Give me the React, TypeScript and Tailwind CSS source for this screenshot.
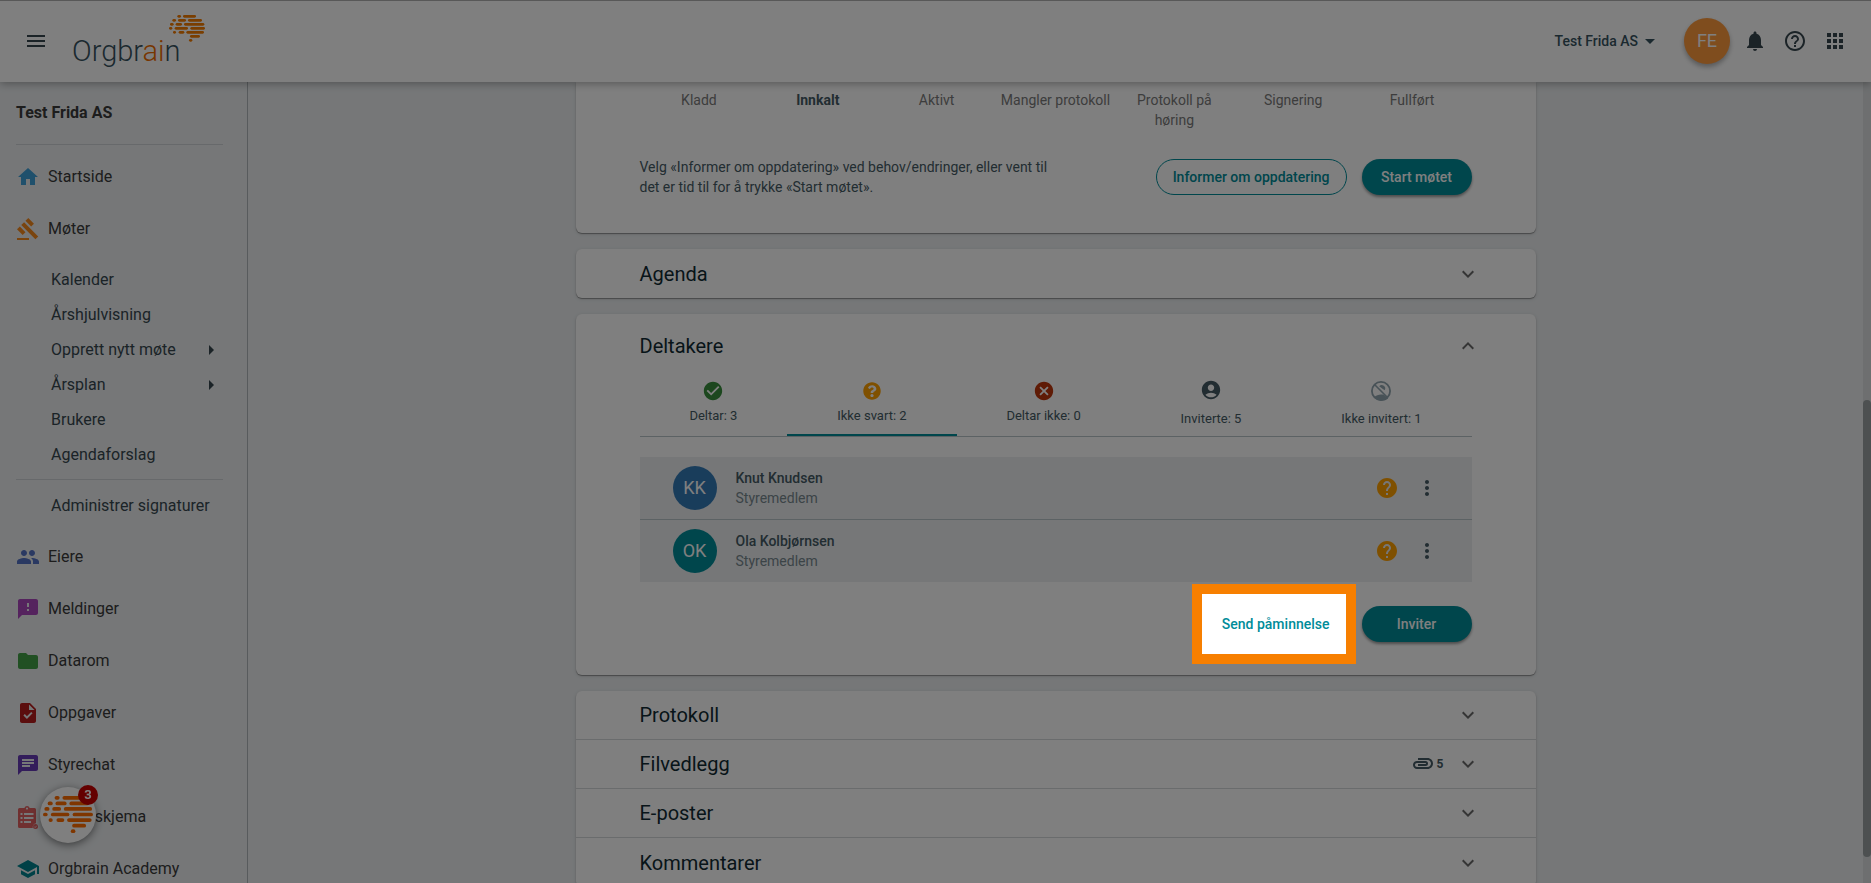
import { useState } from 'react';
import type { ReactNode } from 'react';
import type { IconType } from 'react-icons';
import { FaQuestionCircle } from 'react-icons/fa';
import {
    MdAccountCircle,
    MdApps,
    MdArrowDropDown,
    MdArrowRight,
    MdAttachment,
    MdCancel,
    MdChat,
    MdCheckCircle,
    MdExpandLess,
    MdExpandMore,
    MdFeedback,
    MdFolder,
    MdGavel,
    MdHelp,
    MdHelpOutline,
    MdHome,
    MdMenu,
    MdMoreVert,
    MdNotifications,
    MdPeople,
    MdSchool,
    MdTask,
} from 'react-icons/md';

type SubLink = { label: string; nested?: boolean };

const meetingLinks: SubLink[] = [
    { label: 'Kalender' },
    { label: 'Årshjulvisning' },
    { label: 'Opprett nytt møte', nested: true },
    { label: 'Årsplan', nested: true },
    { label: 'Brukere' },
    { label: 'Agendaforslag' },
];

const steps = ['Kladd', 'Innkalt', 'Aktivt', 'Mangler protokoll', 'Protokoll på høring', 'Signering', 'Fullført'];

const participants = [
    { name: 'Knut Knudsen', initials: 'KK', role: 'Styremedlem', color: 'bg-[#337ab7]' },
    { name: 'Ola Kolbjørnsen', initials: 'OK', role: 'Styremedlem', color: 'bg-[#008c99]' },
];

type Tab = { id: string; label: string; icon: ReactNode };

const tabs: Tab[] = [
    { id: 'yes', label: 'Deltar: 3', icon: <MdCheckCircle size={22} className="-m-0.5 text-[#388e3c]" /> },
    { id: 'pending', label: 'Ikke svart: 2', icon: <FaQuestionCircle size={18} className="text-[#ffa000]" /> },
    { id: 'no', label: 'Deltar ikke: 0', icon: <MdCancel size={22} className="-m-0.5 text-[#bf360c]" /> },
    {
        id: 'invited',
        label: 'Inviterte: 5',
        icon: (
            <span className="flex h-6 items-start">
                <MdAccountCircle size={22} className="text-[#455a64]" />
            </span>
        ),
    },
    { id: 'uninvited', label: 'Ikke invitert: 1', icon: <NotInvitedIcon /> },
];

// x, y and width of every dash in the brain mark
const brainDashes = [
    [25, 0, 11], [42, 0, 39],
    [10, 12, 11], [27, 12, 24], [57, 12, 42],
    [3, 24, 11], [20, 24, 19], [45, 24, 61],
    [0, 36, 10], [17, 36, 40], [64, 36, 44],
    [12, 48, 9], [29, 48, 17], [52, 48, 53],
    [63, 60, 30],
    [60, 72, 10],
];

function BrainMark({ className }: { className: string }) {
    return (
        <svg viewBox="0 0 108 80" className={className} fill="currentColor" aria-hidden="true">
            {brainDashes.map(([x, y, w]) => (
                <rect key={`${x}-${y}`} x={x} y={y} width={w} height="8" rx="4" />
            ))}
        </svg>
    );
}

function NotInvitedIcon() {
    return (
        <svg viewBox="0 0 24 24" className="h-6 w-6 text-[#90a4ae]" fill="currentColor" aria-hidden="true">
            <circle cx="12" cy="12" r="9.100" fill="none" stroke="currentColor" strokeWidth="1.800" />
            <path d="M5 18C7.200 16.200 9.500 15.400 12 15.400c1 0 2 .1 2.900.4L19.200 19.400A10 10 0 0 1 5 18Z" />
            <path d="M10.200 7.200A3.400 3.400 0 0 1 15.600 11.300Z" />
            <path d="M5.500 5.500l13 13" fill="none" stroke="currentColor" strokeWidth="1.600" />
        </svg>
    );
}

function SurveyIcon() {
    return (
        <svg viewBox="0 0 24 24" className="h-6 w-6 text-[#e06060]" fill="currentColor" aria-hidden="true">
            <path
                fillRule="evenodd"
                d="M3.500 3H8.400a2.800 2.800 0 0 1 5.300 0H18.500A1.500 1.500 0 0 1 20 4.500V18.200A4 4 0 0 0 16.800 23H3.500A1.500 1.500 0 0 1 2 21.500V4.500A1.500 1.500 0 0 1 3.500 3ZM11 2.600a1 1 0 1 0 .01 0ZM4.500 8v2h2V8ZM8 8v2h9.500V8ZM4.500 12v2h2v-2ZM8 12v2h9.500v-2ZM4.500 16v2h2v-2ZM8 16v2h7v-2Z"
            />
            <circle cx="19.500" cy="21.500" r="2.500" />
            <path d="M18.300 21.600l.9.900 1.600-1.800" fill="none" stroke="#eceff1" strokeWidth="0.800" />
        </svg>
    );
}

function Header() {
    return (
        <header className="relative z-10 flex h-[82px] shrink-0 items-center border-t border-[#b0b0b0] bg-white px-6 pb-px text-[#37474f] shadow-[0_2px_8px_rgba(0,0,0,0.3)]">
            <button type="button" aria-label="Meny">
                <MdMenu size={24} />
            </button>
            <a href="#" className="ml-6 flex h-15 items-start">
                <span className="mt-[22px] text-[29px] leading-9 font-light text-[#37535f]">
                    Orgbr<span className="text-[#ef6c00]">ai</span>n
                </span>
                <BrainMark className="mt-1 -ml-3 w-9 text-[#f57c00]" />
            </a>
            <div className="ml-auto flex items-center">
                <button type="button" className="flex items-center text-sm font-medium text-[#37535f]">
                    Test Frida AS
                    <MdArrowDropDown size={24} />
                </button>
                <button
                    type="button"
                    className="ml-[22px] flex h-[46px] w-[46px] items-center justify-center rounded-full bg-[#ff9a3c] text-lg text-white shadow-[0_3px_5px_rgba(0,0,0,0.3)]"
                >
                    FE
                </button>
                <div className="ml-[13px] flex gap-4">
                    <button type="button" aria-label="Varsler">
                        <MdNotifications size={24} />
                    </button>
                    <button type="button" aria-label="Hjelp">
                        <MdHelpOutline size={24} />
                    </button>
                    <button type="button" aria-label="Apper">
                        <MdApps size={24} />
                    </button>
                </div>
            </div>
        </header>
    );
}

function NavItem({ label, children }: { label: string; children: ReactNode }) {
    return (
        <a href="#" className="flex h-[52px] items-center gap-2 px-4 text-base text-[#3a3a3a]">
            {children}
            {label}
        </a>
    );
}

function NavIcon({ icon: Icon, className }: { icon: IconType; className: string }) {
    return <Icon size={24} className={className} />;
}

function Sidebar() {
    return (
        <nav className="w-62 shrink-0 border-r border-[#b0b6ba]">
            <h2 className="mr-6 ml-4 flex h-[63px] items-center border-b border-[#cfd3d6] text-base font-bold text-[#3a3a3a]">
                Test Frida AS
            </h2>
            <div className="pt-1.5">
                <NavItem label="Startside">
                    <NavIcon icon={MdHome} className="text-[#3fa0d8]" />
                </NavItem>
                <NavItem label="Møter">
                    <NavIcon icon={MdGavel} className="text-[#f5891d]" />
                </NavItem>
            </div>
            <ul className="mt-[7px] mr-6 ml-4 border-b border-[#cfd3d6] pb-[7px] pl-[35px] text-base text-[#37474f]">
                {meetingLinks.map((link) => (
                    <li key={link.label}>
                        <a href="#" className="flex h-[35px] items-center justify-between">
                            {link.label}
                            {link.nested && <MdArrowRight size={24} />}
                        </a>
                    </li>
                ))}
            </ul>
            <a href="#" className="flex h-[51px] items-center pl-[51px] text-base text-[#37474f]">
                Administrer signaturer
            </a>
            <NavItem label="Eiere">
                <NavIcon icon={MdPeople} className="text-[#5472c4]" />
            </NavItem>
            <NavItem label="Meldinger">
                <NavIcon icon={MdFeedback} className="text-[#ab47bc]" />
            </NavItem>
            <NavItem label="Datarom">
                <NavIcon icon={MdFolder} className="text-[#43a047]" />
            </NavItem>
            <NavItem label="Oppgaver">
                <NavIcon icon={MdTask} className="text-[#b71c1c]" />
            </NavItem>
            <NavItem label="Styrechat">
                <NavIcon icon={MdChat} className="text-[#673ab7]" />
            </NavItem>
            <NavItem label="Spørreskjema">
                <SurveyIcon />
            </NavItem>
            <NavItem label="Orgbrain Academy">
                <NavIcon icon={MdSchool} className="text-[#00838f]" />
            </NavItem>
        </nav>
    );
}

function Card({ children, className = 'rounded-md' }: { children: ReactNode; className?: string }) {
    return (
        <section className={`bg-white shadow-[0_1px_1px_rgba(0,0,0,0.35),0_1px_4px_rgba(0,0,0,0.12)] ${className}`}>
            {children}
        </section>
    );
}

function PanelHeader({ title, open, files }: { title: string; open?: boolean; files?: number }) {
    return (
        <button
            type="button"
            aria-expanded={!!open}
            className={`flex w-full items-center pr-14 pl-16 text-left ${open ? 'h-16' : 'h-[49px]'}`}
        >
            <span className="text-xl text-[#102a33]">{title}</span>
            <span className="ml-auto flex items-center text-[#6b6b6b]">
                {files && (
                    <span className="mr-3 flex items-center gap-0.5 text-xs font-bold text-[#455a64]">
                        <MdAttachment size={24} className="rotate-180" />
                        {files}
                    </span>
                )}
                {open ? <MdExpandLess size={24} /> : <MdExpandMore size={24} />}
            </span>
        </button>
    );
}

function PrimaryButton({ children }: { children: ReactNode }) {
    return (
        <button
            type="button"
            className="h-9 min-w-[110px] rounded-full bg-[#008c99] px-4 text-sm font-medium text-white shadow-[0_2px_3px_rgba(0,0,0,0.4)]"
        >
            {children}
        </button>
    );
}

function StatusCard() {
    return (
        <Card className="rounded-b-md px-16 pt-2 pb-9">
            <ol className="grid grid-cols-7 text-center text-sm text-[#7a7a7a]">
                {steps.map((step) => (
                    <li key={step} className={step === 'Innkalt' ? 'font-bold text-[#455a64]' : 'px-1'}>
                        {step}
                    </li>
                ))}
            </ol>
            <div className="mt-[27px] flex items-center justify-between gap-6">
                <p className="max-w-[420px] text-sm text-[#455a64]">
                    Velg «Informer om oppdatering» ved behov/endringer, eller vent til det er tid til for å trykke
                    «Start møtet».
                </p>
                <div className="flex gap-[15px]">
                    <button
                        type="button"
                        className="h-9 rounded-full border border-[#008c99] px-4 text-sm font-medium text-[#008c99]"
                    >
                        Informer om oppdatering
                    </button>
                    <PrimaryButton>Start møtet</PrimaryButton>
                </div>
            </div>
        </Card>
    );
}

function ParticipantsCard() {
    const [active, setActive] = useState('pending');

    return (
        <Card>
            <PanelHeader title="Deltakere" open />
            <div className="px-16 pb-[33px]">
                <div role="tablist" className="flex border-b border-[#b8c4c9]">
                    {tabs.map((tab) => (
                        <button
                            key={tab.id}
                            type="button"
                            role="tab"
                            aria-selected={tab.id === active}
                            onClick={() => setActive(tab.id)}
                            className={`flex h-[58px] flex-auto flex-col items-center justify-center gap-1.5 border-b-2 pb-1 text-[13px] leading-5 text-[#455a64] ${
                                tab.id === active ? 'border-[#008c99]' : 'border-transparent'
                            }`}
                        >
                            {tab.icon}
                            {tab.label}
                        </button>
                    ))}
                </div>
                <ul className="mt-5 divide-y divide-[#b8c4c9] bg-[#eceff1]">
                    {participants.map((person) => (
                        <li key={person.name} className="flex items-center px-[33px] py-[9px]">
                            <span
                                className={`flex h-11 w-11 items-center justify-center rounded-full text-lg text-white ${person.color}`}
                            >
                                {person.initials}
                            </span>
                            <div className="ml-[19px] text-sm">
                                <p className="font-medium text-[#455a64]">{person.name}</p>
                                <p className="text-[#78888f]">{person.role}</p>
                            </div>
                            <div className="ml-auto flex gap-4">
                                <MdHelp size={24} className="text-[#ffa000]" />
                                <button type="button" aria-label={`Valg for ${person.name}`}>
                                    <MdMoreVert size={24} className="text-[#455a64]" />
                                </button>
                            </div>
                        </li>
                    ))}
                </ul>
                <div className="mt-6 flex justify-end gap-4">
                    <div className="relative">
                        <button type="button" className="h-9 rounded-full px-4 text-sm font-medium text-[#008c99]">
                            Send påminnelse
                        </button>
                        {/* spotlight: the spread shadow dims everything outside the frame */}
                        <div className="pointer-events-none absolute -inset-y-[22px] -right-2.5 -left-3.5 z-50 border-10 border-[#f77f00] shadow-[0_0_0_4000px_rgba(0,0,0,0.5)]" />
                    </div>
                    <PrimaryButton>Inviter</PrimaryButton>
                </div>
            </div>
        </Card>
    );
}

function ChatButton() {
    return (
        <button
            type="button"
            aria-label="Åpne chat"
            className="fixed bottom-10 left-10 z-20 flex h-14 w-14 items-center justify-center rounded-full bg-white shadow-[0_2px_8px_rgba(0,0,0,0.5)]"
        >
            <BrainMark className="w-[50px] text-[#ff6d00]" />
            <span className="absolute -top-0.5 -right-0.5 flex h-5 w-5 items-center justify-center rounded-full bg-[#c80000] text-[13px] font-bold text-white">
                3
            </span>
        </button>
    );
}

export default function App() {
    return (
        <div className="flex h-screen flex-col overflow-hidden bg-[#eceff1] font-[Roboto,sans-serif]">
            <Header />
            <div className="flex min-h-0 flex-1">
                <Sidebar />
                <main className="min-w-0 flex-1">
                    <div className="mx-auto flex max-w-[960px] flex-col gap-4">
                        <StatusCard />
                        <Card>
                            <PanelHeader title="Agenda" />
                        </Card>
                        <ParticipantsCard />
                        <Card className="divide-y divide-[#d5d8da] rounded-md">
                            <PanelHeader title="Protokoll" />
                            <PanelHeader title="Filvedlegg" files={5} />
                            <PanelHeader title="E-poster" />
                            <PanelHeader title="Kommentarer" />
                        </Card>
                    </div>
                </main>
                <div className="flex w-2 flex-col bg-[#dcdfe1]">
                    <div className="mt-[318px] h-[457px] rounded-full bg-[#9aa0a3]" />
                </div>
            </div>
            <ChatButton />
        </div>
    );
}
